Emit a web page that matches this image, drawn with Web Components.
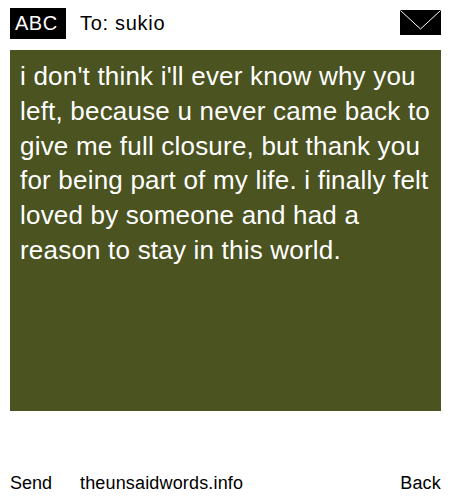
<!doctype html>
<html><head><meta charset="utf-8"><style>
html,body{margin:0;padding:0;background:#fff}
body{font-family:"Liberation Sans",Arial,sans-serif;color:#000}
</style></head><body>
<pager-screen recipient="sukio" site="theunsaidwords.info">i don't think i'll ever know why you left, because u never came back to give me full closure, but thank you for being part of my life. i finally felt loved by someone and had a reason to stay in this world.</pager-screen>
<script>
class PagerHeader extends HTMLElement{
  constructor(){super();this.attachShadow({mode:'open'}).innerHTML=`<style>
  :host{display:flex;align-items:flex-start;height:50px;box-sizing:border-box;padding:8px 9px 0 10px;font-size:20px;line-height:31px}
  .abc{background:#000;color:#fff;width:56px;height:31px;box-sizing:border-box;padding-left:5px;letter-spacing:.5px}
  .to{margin-left:14px;flex:1;line-height:31px;letter-spacing:.7px}
  svg{display:block;margin-top:2px}
  </style><div class="abc">ABC</div><div class="to">To: <slot></slot></div>
  <svg width="41" height="25" viewBox="0 0 41 25"><rect width="41" height="25" fill="#000"/><path d="M0.5 0.5 L20.5 19 L40.5 0.5" fill="none" stroke="#fff" stroke-width="1"/></svg>`;}
}
class MessagePanel extends HTMLElement{
  constructor(){super();this.attachShadow({mode:'open'}).innerHTML=`<style>
  :host{display:block;box-sizing:border-box;margin-left:10px;width:431px;height:361px;padding:9px 10px;background:#4b5320;color:#fff;font-size:26px;line-height:34.8px;letter-spacing:.2px}
  </style><slot></slot>`;}
}
class PagerFooter extends HTMLElement{
  constructor(){super();this.attachShadow({mode:'open'}).innerHTML=`<style>
  :host{display:flex;box-sizing:border-box;height:89px;padding:59px 9px 0 10px;font-size:18px;line-height:26px}
  .send{width:70px}.site{flex:1;letter-spacing:.16px}.back{letter-spacing:.2px}
  </style><div class="send">Send</div><div class="site"><slot></slot></div><div class="back">Back</div>`;}
}
class PagerScreen extends HTMLElement{
  constructor(){super();this.attachShadow({mode:'open'}).innerHTML=`<style>:host{display:block;width:450px;height:500px;overflow:hidden}</style>
  <pager-header></pager-header><message-panel><slot></slot></message-panel><pager-footer></pager-footer>`;}
  connectedCallback(){
    this.shadowRoot.querySelector('pager-header').textContent=this.getAttribute('recipient');
    this.shadowRoot.querySelector('pager-footer').textContent=this.getAttribute('site');
  }
}
customElements.define('pager-header',PagerHeader);
customElements.define('message-panel',MessagePanel);
customElements.define('pager-footer',PagerFooter);
customElements.define('pager-screen',PagerScreen);
</script></body></html>
